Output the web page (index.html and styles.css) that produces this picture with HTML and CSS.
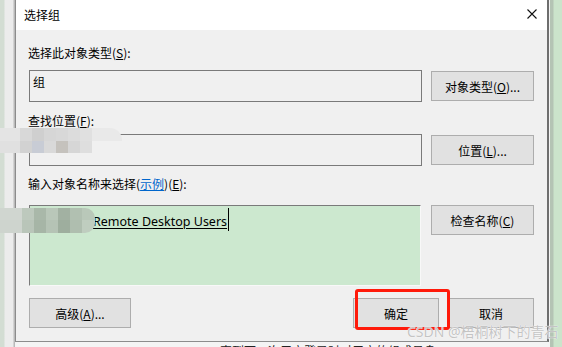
FILE: index.html
```html
<!DOCTYPE html>
<html lang="zh-CN">

<head>
    <meta charset="UTF-8">
    <meta name="viewport" content="width=device-width, initial-scale=1.0">
    <title>选择组</title>
    <link rel="stylesheet" href="styles.css">
</head>

<body>
    <div class="screen">
        <div class="side-left"></div>
        <div class="middle">
            <div class="dialog">
                <div class="titlebar">
                    <span class="title">选择组</span>
                    <svg class="close" width="10" height="10" viewBox="0 0 10 10">
                        <path d="M0.5 0.5 L9.5 9.5 M9.5 0.5 L0.5 9.5" stroke="#111" stroke-width="1.1" fill="none" />
                    </svg>
                </div>
                <div class="content">
                    <div class="label label-type">选择此对象类型(<u>S</u>):</div>
                    <div class="row row-type">
                        <div class="field">组</div>
                        <button class="btn">对象类型(<u>O</u>)...</button>
                    </div>

                    <div class="label label-loc">查找位置(<u>F</u>):</div>
                    <div class="row row-loc">
                        <div class="field"></div>
                        <button class="btn">位置(<u>L</u>)...</button>
                    </div>

                    <div class="label label-name">输入对象名称来选择(<span class="link">示例</span>)(<u>E</u>):</div>
                    <div class="row row-name">
                        <div class="names">
                            <span class="name-text">Remote Desktop Users</span><span class="caret"></span>
                        </div>
                        <button class="btn">检查名称(<u>C</u>)</button>
                    </div>

                    <div class="row row-bottom">
                        <button class="btn btn-adv">高级(<u>A</u>)...</button>
                        <div class="right-btns">
                            <button class="btn btn-small">确定</button>
                            <button class="btn btn-small">取消</button>
                        </div>
                    </div>
                </div>
            </div>
            <div class="behind-text">直到下一次用户登录时对用户的组成员身</div>
        </div>
        <div class="side-right"></div>
    </div>

    <!-- privacy mosaic over the location field and the name prefix -->
    <div class="mosaic mosaic-loc">
        <span></span><span></span><span></span><span></span><span></span><span></span><span></span><span></span>
        <span></span><span></span><span></span><span></span><span></span><span></span><span></span><span></span>
    </div>
    <div class="mosaic mosaic-name">
        <span></span><span></span><span></span><span></span><span></span><span></span><span></span>
        <span></span><span></span><span></span><span></span><span></span><span></span><span></span>
    </div>

    <div class="highlight"></div>
    <div class="watermark">CSDN @梧桐树下的青石</div>
</body>

</html>
```

FILE: styles.css
```css
body {
    margin: 0;
    width: 562px;
    height: 347px;
    overflow: hidden;
    position: relative;
    font-family: "Noto Sans", "Noto Sans CJK SC", sans-serif;
    font-size: 12px;
    color: #000;
    background-color: #f0f0f0;
}

.screen {
    display: flex;
    height: 347px;
}

.side-left {
    width: 15px;
    flex-shrink: 0;
    background: linear-gradient(to right, #d3ddd3 0, #d3ddd3 4px, #ececec 5px, #ececec 13px, #b9b9b9 14px);
}

.middle {
    width: 535px;
    flex-shrink: 0;
    display: flex;
    flex-direction: column;
    background-color: #f4f4f4;
}

.side-right {
    flex: 1;
    background: linear-gradient(to right, #b4c4b4 0, #b4c4b4 3px, #cbe4cb 4px);
}

.dialog {
    width: 531px;
    height: 341px;
    border-left: 1px solid #8c8c8c;
    border-right: 2px solid #6e6e6e;
    border-bottom: 1px solid #8c8c8c;
    background-color: #f0f0f0;
    flex-shrink: 0;
}

.titlebar {
    height: 30px;
    background-color: #fff;
    display: flex;
    align-items: center;
    justify-content: space-between;
    padding: 0 10px 0 8px;
}

.title {
    font-family: "Noto Sans CJK SC", sans-serif;
    font-size: 12px;
    line-height: 16px;
}

.close {
    display: block;
    margin-top: -2px;
}

.content {
    padding: 15px 13px 0 13px;
}

.label {
    line-height: 16px;
    height: 16px;
    margin-left: -1px;
    font-family: "Noto Sans CJK SC", sans-serif;
}

.label u,
.btn u {
    text-underline-offset: 1px;
}

.link {
    color: #0066cc;
    text-decoration: underline;
    text-underline-offset: 1px;
}

.row {
    display: flex;
    justify-content: space-between;
    align-items: center;
}

.row-type {
    margin-top: 9px;
}

.label-loc {
    margin-top: 11px;
}

.row-loc {
    margin-top: 5px;
}

.label-name {
    margin-top: 10px;
}

.row-name {
    margin-top: 13px;
    align-items: flex-start;
}

.row-bottom {
    margin-top: 12px;
}

.field {
    border: 1px solid #7a7a7a;
    background-color: #f0f0f0;
    padding: 3px 0 0 3px;
    width: 388px;
    height: 27px;
    font-family: "Noto Sans CJK SC", sans-serif;
    line-height: 16px;
}

.btn {
    width: 103px;
    height: 30px;
    border: 1px solid #adadad;
    background-color: #e1e1e1;
    font-family: "Noto Sans CJK SC", sans-serif;
    font-size: 12px;
    color: #000;
    padding: 0;
    margin: 0;
}

.btn-adv {
    width: 102px;
}

.btn-small {
    width: 86px;
}

.right-btns {
    display: flex;
    gap: 9px;
}

.names {
    width: 392px;
    height: 81px;
    border-top: 1px solid #7a7a7a;
    border-left: 1px solid #7a7a7a;
    border-right: 1px solid #f8f8f8;
    border-bottom: 1px solid #f8f8f8;
    background-color: #cce8cf;
    box-sizing: border-box;
    padding: 7px 0 0 63px;
    display: flex;
    align-items: flex-start;
}

.name-text {
    font-family: "Noto Sans", sans-serif;
    font-size: 12.5px;
    line-height: 18px;
    text-decoration: underline;
    text-underline-offset: 2px;
    color: #000;
}

.caret {
    width: 1px;
    height: 23px;
    background-color: #000;
    margin-top: -5px;
    margin-left: 1px;
}

.behind-text {
    padding: 1px 0 0 205px;
    font-family: "Noto Sans CJK SC", sans-serif;
    font-size: 12px;
    line-height: 16px;
    color: #222;
    white-space: nowrap;
}

/* overlays */

.mosaic {
    position: absolute;
    left: 0;
    display: grid;
    filter: blur(0.7px);
}

.mosaic-loc {
    top: 128px;
    grid-template-columns: 20px repeat(6, 12px) 30px;
    grid-template-rows: 13px 12px;
}

.mosaic-loc span:nth-child(1) { background: #e4e4e4; }
.mosaic-loc span:nth-child(2) { background: #d8d8d8; }
.mosaic-loc span:nth-child(3) { background: #cfcfcf; }
.mosaic-loc span:nth-child(4) { background: #d6d6d6; }
.mosaic-loc span:nth-child(5) { background: #d8d8d8; }
.mosaic-loc span:nth-child(6) { background: #dcdcdc; }
.mosaic-loc span:nth-child(7) { background: #e0e0e0; }
.mosaic-loc span:nth-child(8) { background: #e9e9e9; border-radius: 0 12px 0 0; }
.mosaic-loc span:nth-child(9) { background: #e0e0e0; }
.mosaic-loc span:nth-child(10) { background: #d2d2d2; }
.mosaic-loc span:nth-child(11) { background: #c8ccd5; }
.mosaic-loc span:nth-child(12) { background: #d9d9d9; }
.mosaic-loc span:nth-child(13) { background: #c5c2bd; }
.mosaic-loc span:nth-child(14) { background: #d6d6d6; }
.mosaic-loc span:nth-child(15) { background: #dedede; }
.mosaic-loc span:nth-child(16) { background: #f0f0f0; }

.mosaic-name {
    top: 208px;
    grid-template-columns: 22px repeat(5, 12px) 13px;
    grid-template-rows: 12px 13px;
}

.mosaic-name span:nth-child(1) { background: #d0d6d0; }
.mosaic-name span:nth-child(2) { background: #bdc9bd; }
.mosaic-name span:nth-child(3) { background: #a9b8a9; }
.mosaic-name span:nth-child(4) { background: #b9c7b9; }
.mosaic-name span:nth-child(5) { background: #a2b1a2; }
.mosaic-name span:nth-child(6) { background: #b1c0b1; }
.mosaic-name span:nth-child(7) { background: #b9c8b9; border-radius: 0 10px 0 0; }
.mosaic-name span:nth-child(8) { background: #ced4ce; }
.mosaic-name span:nth-child(9) { background: #b9c5b9; }
.mosaic-name span:nth-child(10) { background: #a6b5a6; }
.mosaic-name span:nth-child(11) { background: #b5c3b5; }
.mosaic-name span:nth-child(12) { background: #9eae9e; }
.mosaic-name span:nth-child(13) { background: #afbeaf; }
.mosaic-name span:nth-child(14) { background: #bfcdbf; border-radius: 0 0 10px 0; }

.highlight {
    position: absolute;
    left: 355px;
    top: 289px;
    width: 89px;
    height: 35px;
    border: 3px solid #ff1a0a;
    border-radius: 3px;
}

.watermark {
    position: absolute;
    left: 407px;
    top: 323px;
    font-family: "Noto Sans", "Noto Sans CJK SC", sans-serif;
    font-size: 14px;
    line-height: 18px;
    color: #c4c4c4;
    text-shadow: 0 0 1px #fff, 0 0 1px #fff;
    white-space: nowrap;
}
```
